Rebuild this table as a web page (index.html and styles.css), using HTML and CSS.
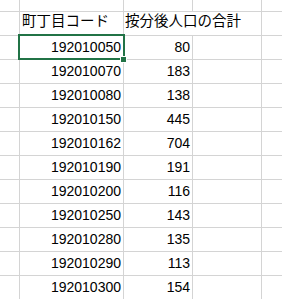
FILE: index.html
```html
<!DOCTYPE html>
<html lang="ja">
<head>
<meta charset="utf-8">
<link rel="stylesheet" href="styles.css">
</head>
<body>
<div class="sheet">
  <div class="c top"></div><div class="c top"></div><div class="c top"></div><div class="c top"></div><div class="c top last"></div>

  <div class="c"></div><div class="c head">町丁目コード</div><div class="c head span2">按分後人口の合計</div><div class="c last"></div>

  <div class="c"></div><div class="c num sel">192010050<span class="box"></span><span class="handle"></span></div><div class="c num">80</div><div class="c"></div><div class="c last"></div>
  <div class="c"></div><div class="c num">192010070</div><div class="c num">183</div><div class="c"></div><div class="c last"></div>
  <div class="c"></div><div class="c num">192010080</div><div class="c num">138</div><div class="c"></div><div class="c last"></div>
  <div class="c"></div><div class="c num">192010150</div><div class="c num">445</div><div class="c"></div><div class="c last"></div>
  <div class="c"></div><div class="c num">192010162</div><div class="c num">704</div><div class="c"></div><div class="c last"></div>
  <div class="c"></div><div class="c num">192010190</div><div class="c num">191</div><div class="c"></div><div class="c last"></div>
  <div class="c"></div><div class="c num">192010200</div><div class="c num">116</div><div class="c"></div><div class="c last"></div>
  <div class="c"></div><div class="c num">192010250</div><div class="c num">143</div><div class="c"></div><div class="c last"></div>
  <div class="c"></div><div class="c num">192010280</div><div class="c num">135</div><div class="c"></div><div class="c last"></div>
  <div class="c"></div><div class="c num">192010290</div><div class="c num">113</div><div class="c"></div><div class="c last"></div>
  <div class="c"></div><div class="c num">192010300</div><div class="c num">154</div><div class="c"></div><div class="c last"></div>
</div>
</body>
</html>
```
FILE: styles.css
```css
html, body {
  margin: 0;
  padding: 0;
  background: #ffffff;
}

.sheet {
  display: grid;
  grid-template-columns: 20px 104px 69px 69px 1fr;
  grid-template-rows: 12px repeat(12, 24px);
  width: 282px;
  height: 299px;
  overflow: hidden;
  color: #000000;
}

.c {
  box-sizing: border-box;
  border-right: 1px solid #d4d4d4;
  border-bottom: 1px solid #d4d4d4;
  white-space: nowrap;
  font-family: "Liberation Sans", Arial, sans-serif;
  font-size: 14px;
  line-height: 23px;
}

.c.last {
  border-right: none;
}

.head {
  font-family: "Noto Sans CJK JP", "Noto Sans", sans-serif;
  font-size: 14.5px;
  line-height: 16px;
  padding-left: 2px;
}

.span2 {
  grid-column: span 2;
  padding-left: 1px;
}

.num {
  text-align: right;
  padding-right: 2px;
}

.sel {
  position: relative;
}

.box {
  position: absolute;
  left: -2px;
  top: -2px;
  right: -2px;
  bottom: -1px;
  border: 2px solid #217346;
  box-sizing: border-box;
}

.handle {
  position: absolute;
  right: -4px;
  bottom: -4px;
  width: 5px;
  height: 5px;
  background: #217346;
  border: 1px solid #ffffff;
}
```
